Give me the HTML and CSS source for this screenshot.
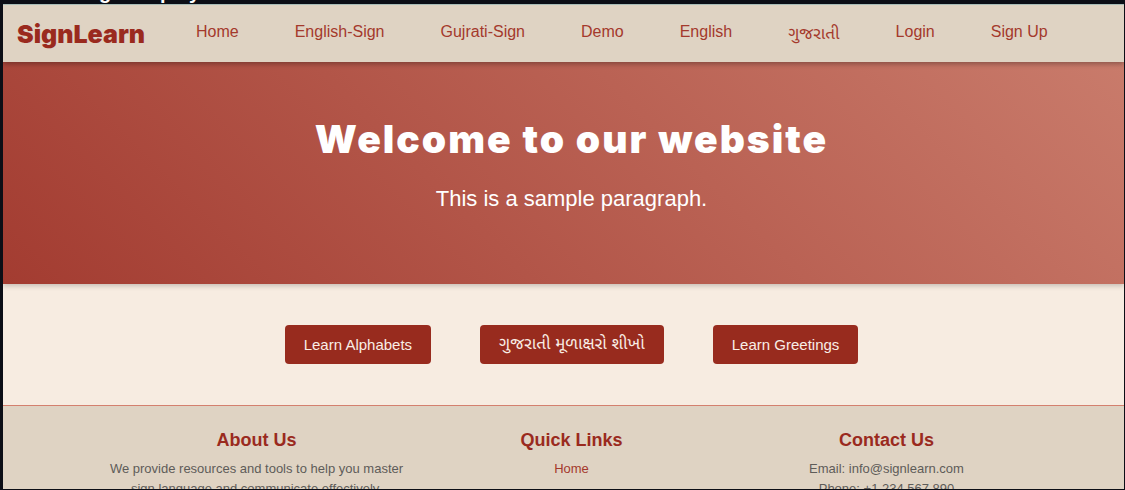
FILE: index.html
```html
<!DOCTYPE html>
<html lang="en">
<head>
<meta charset="utf-8">
<title>SignLearn</title>
<link rel="stylesheet" href="styles.css">
</head>
<body>
<div class="caption">Sign Display</div>
<div class="page">
  <header class="navbar">
    <a class="logo" href="#">SignLearn</a>
    <nav class="nav-links">
      <a href="#">Home</a>
      <a href="#">English-Sign</a>
      <a href="#">Gujrati-Sign</a>
      <a href="#">Demo</a>
      <a href="#">English</a>
      <a class="gujarati" href="#" lang="gu">ગુજરાતી</a>
      <a href="#">Login</a>
      <a href="#">Sign Up</a>
    </nav>
  </header>
  <section class="hero">
    <h1>Welcome to our website</h1>
    <p>This is a sample paragraph.</p>
  </section>
  <main class="actions">
    <button type="button">Learn Alphabets</button>
    <button class="gujarati" type="button" lang="gu">ગુજરાતી મૂળાક્ષરો શીખો</button>
    <button type="button">Learn Greetings</button>
  </main>
  <footer class="footer">
    <section>
      <h2>About Us</h2>
      <p>We provide resources and tools to help you master sign language and communicate effectively.</p>
    </section>
    <section>
      <h2>Quick Links</h2>
      <a href="#">Home</a>
    </section>
    <section>
      <h2>Contact Us</h2>
      <p>Email: info@signlearn.com</p>
      <p>Phone: +1 234 567 890</p>
    </section>
  </footer>
</div>
</body>
</html>
```
FILE: styles.css
```css
* { box-sizing: border-box; }
body {
  margin: 0;
  height: 100vh;
  padding: 0 1px 1px 3px;
  display: flex;
  flex-direction: column;
  overflow: hidden;
  background: #0c0e16;
  font-family: "Liberation Sans", Arial, "Noto Sans Gujarati", sans-serif;
}
h1, h2, p { margin: 0; }
a { color: #a4392c; text-decoration: none; }
.caption {
  flex: none;
  display: flex;
  flex-direction: column;
  justify-content: flex-end;
  height: 4px;
  overflow: hidden;
  padding-left: 77px;
  color: #fff;
  font-size: 20px;
  font-weight: bold;
  line-height: 24px;
}
.page {
  flex: 1;
  min-height: 0;
  overflow: hidden;
  background: #f7ece1;
}
.navbar {
  position: relative;
  z-index: 1;
  display: flex;
  height: 58px;
  padding: 0 14px;
  border-top: 1px solid #a9bdb8;
  background: #dfd3c3;
  box-shadow: 0 2px 5px rgba(0, 0, 0, 0.3);
}
.logo {
  width: 179px;
  padding-top: 14px;
  color: #9a2a1e;
  font-family: Inter, "Arial Black", sans-serif;
  font-size: 25px;
  font-weight: 900;
  line-height: 30px;
}
.nav-links {
  display: flex;
  gap: 56px;
  padding-top: 17px;
  font-size: 16px;
  line-height: 20px;
  white-space: nowrap;
}
.nav-links .gujarati { font-size: 17px; line-height: 24px; }
.hero {
  position: relative;
  height: 222px;
  padding: 52px 0 0 16px;
  background: linear-gradient(45deg, #a33c31, #c97b6b);
  box-shadow: 0 2px 5px rgba(0, 0, 0, 0.2);
  color: #fff;
  text-align: center;
}
.hero h1 {
  font-family: Inter, "Arial Black", sans-serif;
  font-size: 39px;
  font-weight: 900;
  letter-spacing: 2px;
  line-height: 50px;
}
.hero p {
  margin-top: 22px;
  font-size: 22px;
  line-height: 26px;
}
.actions {
  display: flex;
  justify-content: center;
  gap: 49px;
  padding: 41px 0 41px 16px;
}
.actions button {
  height: 39px;
  padding: 0 19px;
  border: 0;
  border-radius: 4px;
  background: #982b1e;
  color: #f9eee6;
  font-family: inherit;
  font-size: 15px;
}
.actions .gujarati { font-size: 17px; }
.footer {
  display: flex;
  justify-content: center;
  border-top: 1px solid #d4806e;
  padding: 23px 80px 23px 96px;
  background: #dfd3c3;
  color: #5e5c59;
  font-size: 13px;
  line-height: 20px;
  text-align: center;
}
.footer section { flex: 1; padding: 0 8px; }
.footer h2 {
  margin-bottom: 8px;
  color: #9a2a1e;
  font-size: 18px;
  line-height: 22px;
}
```
